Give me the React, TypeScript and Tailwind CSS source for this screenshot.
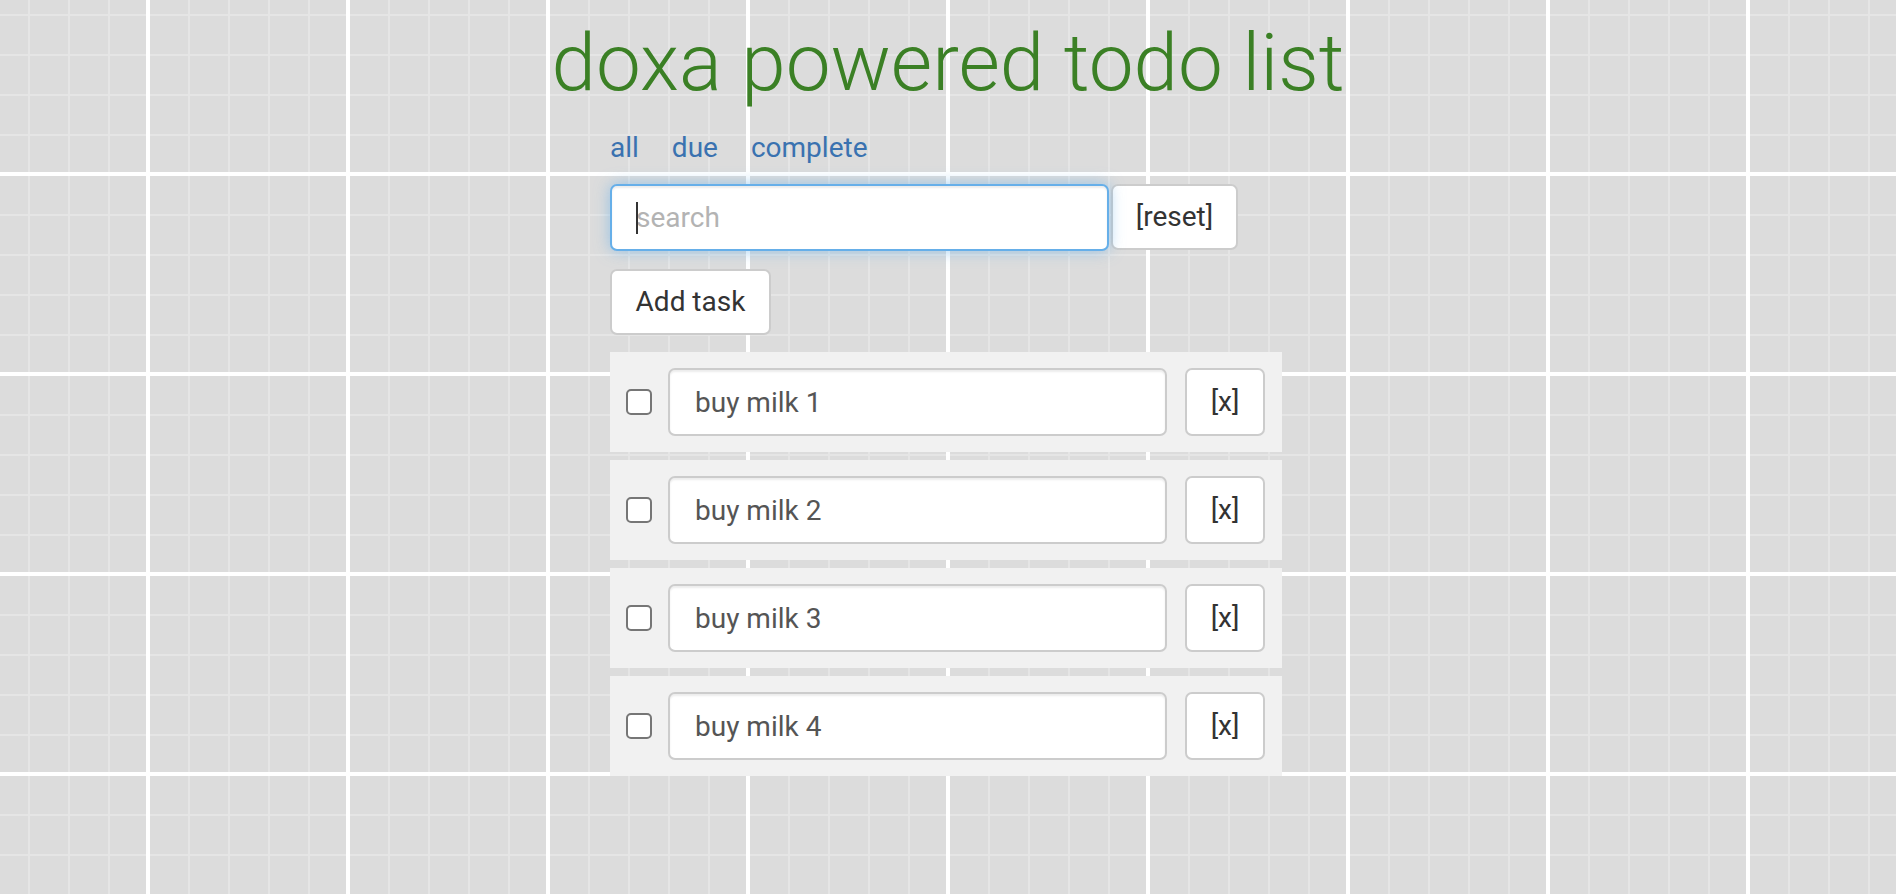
import React from "react";

const todos = ["buy milk 1", "buy milk 2", "buy milk 3", "buy milk 4"];

const filters = ["all", "due", "complete"];

function TodoRow({ label }: { label: string }) {
  return (
    <li className="flex h-[100px] items-center bg-[#f1f1f1] pl-4 pr-[17px]">
      <span className="block size-[26px] shrink-0 rounded-[5px] border-2 border-[#767676] bg-white" />
      <input
        className="ml-4 h-[68px] w-[499px] rounded-[7px] border-2 border-[#cccccc] bg-white pl-[25px] text-[28px] text-[#555555] shadow-[inset_0_2px_2px_rgba(0,0,0,0.075)] outline-none"
        defaultValue={label}
      />
      <button className="ml-[18px] h-[68px] w-[80px] rounded-[7px] border-2 border-[#cccccc] bg-white text-[28px] text-[#333333]">
        [x]
      </button>
    </li>
  );
}

export default function App() {
  return (
    <div className="min-h-screen bg-[#dcdcdc] font-['Roboto','Liberation_Sans',sans-serif] [background-image:linear-gradient(to_right,#ffffff_4px,transparent_4px),linear-gradient(to_bottom,#ffffff_4px,transparent_4px),linear-gradient(to_right,#e5e5e5_2px,transparent_2px),linear-gradient(to_bottom,#e5e5e5_2px,transparent_2px)] [background-position:146px_0,0_172px,28px_0,0_14px] [background-size:200px_200px,200px_200px,40px_40px,40px_40px]">
      <h1 className="pt-[23px] text-center text-[80px] leading-[80px] font-light whitespace-nowrap text-[#3b8025]">
        doxa powered todo list
      </h1>

      <main className="mx-auto w-[676px] pr-1">
        <nav className="mt-[26px] flex h-[38px] gap-[33px] text-[28px] leading-[38px] text-[#3a72b0]">
          {filters.map((f) => (
            <a key={f} href="#">
              {f}
            </a>
          ))}
        </nav>

        <div className="mt-[17px] flex gap-[2px]">
          <div className="relative">
            <input
              className="h-[67px] w-[499px] rounded-[7px] border-2 border-[#66afe9] bg-white pl-[24px] text-[28px] text-[#555555] shadow-[inset_0_2px_2px_rgba(0,0,0,0.075),0_0_15px_rgba(102,175,233,0.6)] outline-none placeholder:text-[#b3b3b3]"
              placeholder="search"
            />
            {/* caret */}
            <span className="absolute top-[18px] left-[26px] h-[32px] w-[2px] bg-[#333333]" />
          </div>
          <button className="h-[66px] w-[127px] rounded-[7px] border-2 border-[#cccccc] bg-white text-[28px] text-[#333333]">
            [reset]
          </button>
        </div>

        <button className="mt-[18px] h-[66px] w-[161px] rounded-[7px] border-2 border-[#cccccc] bg-white text-[28px] text-[#333333]">
          Add task
        </button>

        <ul className="mt-[17px] flex flex-col gap-2">
          {todos.map((t) => (
            <TodoRow key={t} label={t} />
          ))}
        </ul>
      </main>
    </div>
  );
}
